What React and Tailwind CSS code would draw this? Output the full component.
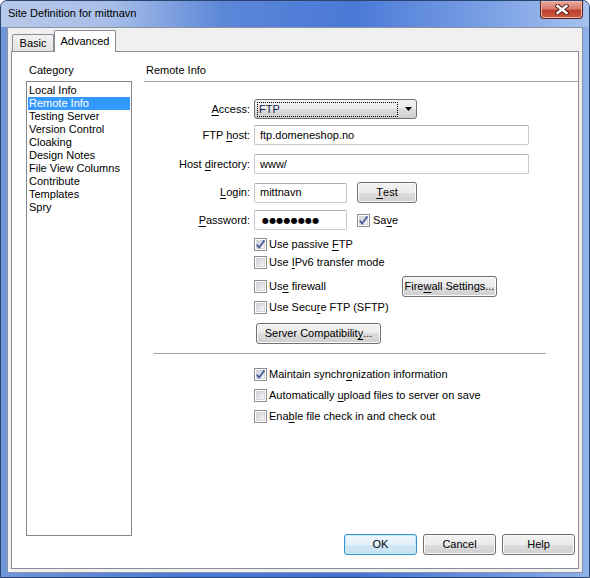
import React from "react";

const U = ({ children }) => <span className="underline underline-offset-[2px]">{children}</span>;

const Check = ({ checked }) => (
  <span className="relative flex h-[13px] w-[13px] shrink-0 items-center justify-center border border-[#8f8f8f] bg-white">
    <span className="h-[9px] w-[9px] border border-[#d4d6da] bg-[linear-gradient(135deg,#cfd3d9,#f4f5f6)]" />
    {checked && (
      <svg className="absolute left-0 top-0" width="11" height="11" viewBox="0 0 11 11">
        <path d="M1.8 5.6 L4.2 8.6 L9.4 1.4" fill="none" stroke="#4a5e9c" strokeWidth="1.8" />
      </svg>
    )}
  </span>
);

const Btn = ({ children, className = "", def }) => (
  <div
    className={`flex h-[21px] items-center justify-center rounded-[3px] border ${
      def
        ? "border-[#3c8fcf] bg-[linear-gradient(#eef7fd,#e3f1fb_50%,#d2e8f6_50%,#c6e0f2)] shadow-[inset_0_0_0_1px_#c4ecfb]"
        : "border-[#707070] bg-[linear-gradient(#f2f2f2,#ebebeb_50%,#dddddd_50%,#cfcfcf)] shadow-[inset_0_0_0_1px_#fbfbfb]"
    } ${className}`}
  >
    {children}
  </div>
);

const Input = ({ children, className = "" }) => (
  <div
    className={`flex h-[20px] items-center rounded-[2px] border border-[#c5c9d1] border-t-[#abadb3] bg-white pl-[5px] ${className}`}
  >
    {children}
  </div>
);

const Label = ({ children }) => <div className="w-[110px] shrink-0 pr-[4px] text-right">{children}</div>;

const CheckRow = ({ checked, children, className = "" }) => (
  <div className={`flex h-[16px] items-center gap-[2px] pl-[110px] ${className}`}>
    <Check checked={checked} />
    <span>{children}</span>
  </div>
);

const categories = [
  "Local Info",
  "Remote Info",
  "Testing Server",
  "Version Control",
  "Cloaking",
  "Design Notes",
  "File View Columns",
  "Contribute",
  "Templates",
  "Spry",
];

export default function App() {
  return (
    <div className="flex h-[578px] w-[590px] flex-col overflow-hidden rounded-t-[7px] border border-[#2a4470] bg-[linear-gradient(to_right,#6f95da,#4a7ad6_30%,#4573d4_60%,#6a94e2_85%,#8fb1ea)] font-['Liberation_Sans',Arial,sans-serif] text-[11px] leading-[13px] text-black">
      <div className="flex h-[26px] shrink-0 items-start justify-between bg-[linear-gradient(to_right,#b7c9e9,#a9bfe8_18%,#5b86d8_38%,#4a79d6_60%,#7fa3e6_85%,#a7c2ee)]">
        <div className="pl-[7px] pt-[6px]">Site Definition for mittnavn</div>
        <div className="mr-[6px] flex h-[18px] w-[43px] items-center justify-center rounded-b-[4px] border border-t-0 border-[#5a221a] bg-[linear-gradient(#e8a99d,#d77d6d_45%,#c0402f_55%,#c95a3e)] shadow-[inset_0_0_0_1px_#f0b8ad]">
          <svg width="14" height="11" viewBox="0 0 14 11">
            <path d="M2.5 2 L11.5 9 M11.5 2 L2.5 9" stroke="#4a1c16" strokeWidth="4.4" strokeLinecap="square" />
            <path d="M2.5 2 L11.5 9 M11.5 2 L2.5 9" stroke="#ffffff" strokeWidth="2.4" strokeLinecap="square" />
          </svg>
        </div>
      </div>

      <div className="mx-[6px] flex h-[546px] flex-col border border-[#8a94a6] bg-[#f0f0f0] px-[3px] pb-[3px]">
        <div className="flex h-[23px] shrink-0 items-end pl-[1px]">
          <div className="flex h-[17px] w-[42px] items-center justify-center rounded-t-[2px] border border-b-0 border-[#898c95] bg-[linear-gradient(#f2f2f2,#e3e3e3)]">
            Basic
          </div>
          <div className="relative z-10 -mb-px flex h-[22px] w-[62px] items-start justify-center rounded-t-[2px] border border-b-0 border-[#898c95] bg-white pt-[4px]">
            Advanced
          </div>
        </div>

        <div className="flex flex-1 flex-col border border-[#898c95] bg-white">
          <div className="flex items-start">
            <div className="ml-[14px] flex flex-col pt-[12px]">
              <div className="pl-[3px]">Category</div>
              <div className="mt-[4px] h-[455px] w-[106px] border border-[#828790] px-[1px] pt-[2px]">
                {categories.map((c) => (
                  <div
                    key={c}
                    className={`h-[13px] pl-[1px] ${c === "Remote Info" ? "bg-[#3399ff] text-white" : ""}`}
                  >
                    {c}
                  </div>
                ))}
              </div>
            </div>

            <div className="ml-[12px] flex flex-1 flex-col pt-[12px]">
              <div className="pl-[2px]">Remote Info</div>
              <div className="mt-[4px] h-px bg-[#a0a0a0]" />

              <div className="mt-[17px] flex h-[20px] items-center">
                <Label>
                  <U>A</U>ccess:
                </Label>
                <div className="flex h-[20px] w-[163px] items-center rounded-[3px] border border-[#707070] bg-[linear-gradient(#f2f2f2,#ebebeb_50%,#dddddd_50%,#cfcfcf)] pl-[2px]">
                  <div className="flex h-[15px] w-[141px] items-center border border-dotted border-black pl-[1px] text-[#101c50]">
                    FTP
                  </div>
                  <svg className="ml-[7px]" width="7" height="4" viewBox="0 0 7 4">
                    <path d="M0 0 H7 L3.5 4 Z" fill="#000" />
                  </svg>
                </div>
              </div>

              <div className="mt-[6px] flex items-center">
                <Label>
                  FTP <U>h</U>ost:
                </Label>
                <Input className="w-[275px]">ftp.domeneshop.no</Input>
              </div>

              <div className="mt-[9px] flex items-center">
                <Label>
                  Host <U>d</U>irectory:
                </Label>
                <Input className="w-[275px]">www/</Input>
              </div>

              <div className="mt-[8px] flex items-center">
                <Label>
                  <U>L</U>ogin:
                </Label>
                <Input className="w-[93px]">mittnavn</Input>
                <Btn className="ml-[10px] h-[20px] w-[60px]">
                  <U>T</U>est
                </Btn>
              </div>

              <div className="mt-[7px] flex items-center">
                <Label>
                  <U>P</U>assword:
                </Label>
                <Input className="w-[93px] pl-[7px] font-['DejaVu_Sans',sans-serif] text-[8px] tracking-[0.2px]">
                  ●●●●●●●●
                </Input>
                <div className="ml-[10px] flex items-center gap-[3px]">
                  <Check checked />
                  <span>
                    Sa<U>v</U>e
                  </span>
                </div>
              </div>

              <CheckRow checked className="mt-[6px]">
                Use passive <U>F</U>TP
              </CheckRow>
              <CheckRow className="mt-[2px]">
                Use <U>I</U>Pv6 transfer mode
              </CheckRow>

              <div className="mt-[6px] flex h-[20px] items-center pl-[110px]">
                <div className="flex w-[148px] items-center gap-[2px]">
                  <Check />
                  <span>
                    Us<U>e</U> firewall
                  </span>
                </div>
                <Btn className="h-[20px] w-[95px]">
                  Fire<U>w</U>all Settings...
                </Btn>
              </div>

              <CheckRow className="mt-[3px]">
                Use Secu<U>r</U>e FTP (SFTP)
              </CheckRow>

              <div className="mt-[8px] pl-[112px]">
                <Btn className="h-[20px] w-[125px]">
                  Server Compatibilit<U>y</U>...
                </Btn>
              </div>

              <div className="ml-[10px] mt-[9px] h-px w-[392px] bg-[#a0a0a0]" />

              <CheckRow checked className="mt-[12px]">
                Maintain synchr<U>o</U>nization information
              </CheckRow>
              <CheckRow className="mt-[5px]">
                Automatically <U>u</U>pload files to server on save
              </CheckRow>
              <CheckRow className="mt-[5px]">
                Ena<U>b</U>le file check in and check out
              </CheckRow>
            </div>
          </div>

          <div className="relative z-10 -mt-[2px] flex justify-end gap-[6px] pr-[3px]">
            <Btn def className="w-[73px]">
              OK
            </Btn>
            <Btn className="w-[73px]">Cancel</Btn>
            <Btn className="w-[73px]">Help</Btn>
          </div>
        </div>
      </div>
    </div>
  );
}
